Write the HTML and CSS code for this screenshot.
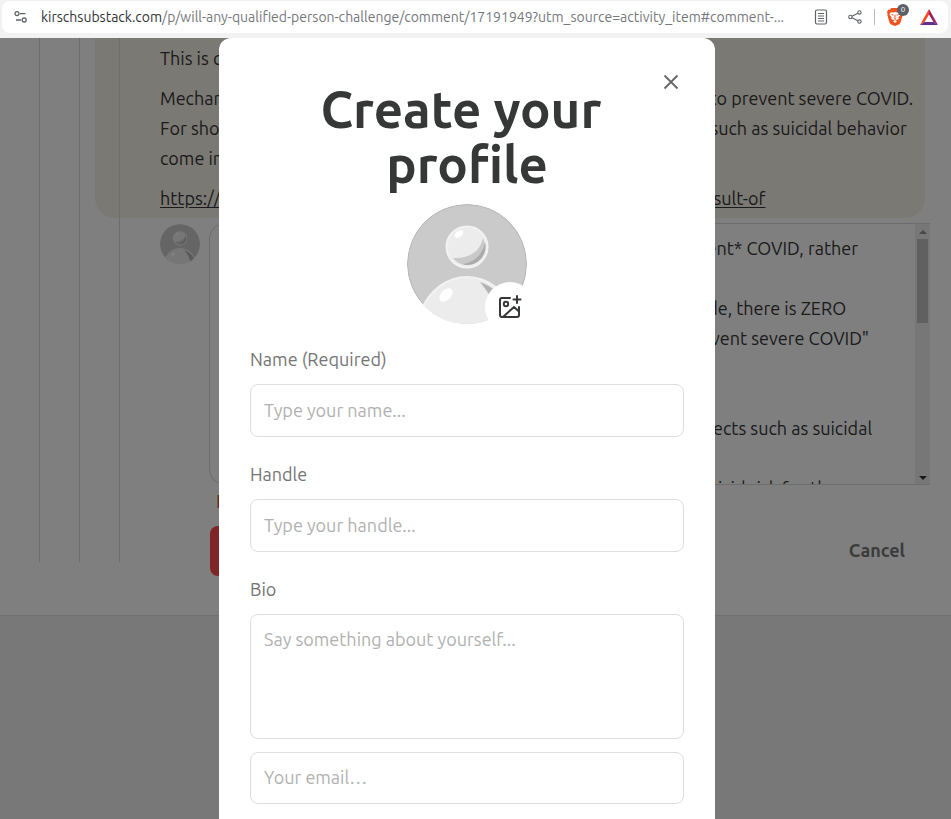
FILE: index.html
```html
<!DOCTYPE html>
<html lang="en">
<head>
    <meta charset="UTF-8">
    <meta name="viewport" content="width=device-width, initial-scale=1.0">
    <title>Create your profile</title>
    <link rel="stylesheet" href="styles.css">
</head>
<body>

    <!-- Address bar -->
    <header class="toolbar">
        <div class="address-bar">
            <button type="button" class="icon-button" aria-label="Site settings">
                <svg width="14" height="12" viewBox="0 0 14 12" fill="none" stroke="#5f6368" stroke-width="1.3">
                    <circle cx="3" cy="2.6" r="2"/><path d="M6 2.6h5.5M2 9h5"/><circle cx="10.2" cy="9" r="2"/>
                </svg>
            </button>
            <a href="#" class="url">kirschsubstack.com<span class="url-path">/p/will-any-qualified-person-challenge/comment/17191949?utm_source=activity_item#comment-...</span></a>
            <div class="toolbar-actions">
                <button type="button" class="icon-button" aria-label="Reader mode">
                    <svg width="14" height="16" viewBox="0 0 14 16" fill="none" stroke="#5f6368" stroke-width="1.2">
                        <rect x="1.5" y="1" width="11" height="14" rx="1.5"/><path d="M4 4.5h6M4 7h6M4 9.5h6M4 12h6"/>
                    </svg>
                </button>
                <button type="button" class="icon-button" aria-label="Share">
                    <svg width="14" height="14" viewBox="0 0 14 14" fill="none" stroke="#5f6368" stroke-width="1.1">
                        <circle cx="2.4" cy="7" r="1.7"/><circle cx="11.4" cy="2.4" r="1.7"/><circle cx="11.4" cy="11.6" r="1.7"/>
                        <path d="M4 6.2l5.9-3M4 7.8l5.9 3"/>
                    </svg>
                </button>
                <span class="divider"></span>
                <button type="button" class="icon-button shields" aria-label="Shields">
                    <svg width="16" height="18" viewBox="0 0 16 18">
                        <path fill="#f1531e" d="M4.4 0h7.2L13.3 1.8l1.4-.2L16 4l-.5 1.6.2 1.2-2 7.3c-.3 1.1-1 1.8-1.8 2.4L8 18l-3.9-1.5c-.9-.6-1.5-1.3-1.8-2.4l-2-7.3.2-1.2L0 4l1.3-2.4 1.4.2z"/>
                        <path fill="#fff" d="M3.7 4.2l2.5.3L8 4l1.8.5 2.5-.3 1.3 2.4-2.2 2.8.3 1.5-2.1 1.1L8 11.2 6.4 12l-2.1-1.1.3-1.5-2.2-2.8zM6 13.3l2-1.2 2 1.2-2 1.8z"/>
                        <path fill="none" stroke="#f1531e" d="M4.4 6.6l2.1.5M11.6 6.6l-2.1.5M8 6.8v2.4M6.7 9.6L8 10.4l1.3-.8"/>
                    </svg>
                    <span class="badge">0</span>
                </button>
                <button type="button" class="icon-button" aria-label="Rewards">
                    <svg width="18" height="16" viewBox="0 0 18 16">
                        <path fill="#ff4724" d="M9 0v5.6L4.6 13 0 16z"/>
                        <path fill="#9e1f63" d="M9 0l9 16-4.6-3L9 5.6z"/>
                        <path fill="#662d91" d="M0 16l4.6-3h8.8l4.6 3z"/>
                    </svg>
                </button>
            </div>
        </div>
    </header>

    <main class="page">
        <!-- Comment thread -->
        <div class="thread">
            <div class="rail"></div>
            <div class="rail"></div>
            <div class="rail"></div>
            <div class="thread-content">
                <article class="comment">
                    <p>This is correct.</p>
                    <p>Mechanism of action is spike proteins antibodies that the body used to prevent severe COVID.<br>
                    For short term uses of the drugs there are some known side effects, such as suicidal behavior<br>
                    come into play.</p>
                    <p><a href="#">https://www.kirschsubstack.com/p/how-to-treat-severe-covid-as-a-result-of</a></p>
                </article>
                <div class="reply">
                    <svg class="reply-avatar" width="40" height="40" viewBox="0 0 120 120" aria-hidden="true">
                        <use href="#avatar"/>
                    </svg>
                    <form class="reply-form">
                        <div class="editor">
                            <textarea class="editor-text" aria-label="Reply" wrap="off">
I have asked if the trials were never able to say if it will *prevent* COVID, rather
than treat it.
If you look at the whole of the public record and all of the code, there is ZERO
evidence in the later trial showing that it can or will ever "prevent severe COVID"


There are several other papers which list some of the side effects such as suicidal

The authors have looked at all of the published data on the suicid risk for the</textarea>
                            <div class="scrollbar">
                                <span class="arrow-up"></span>
                                <span class="thumb"></span>
                                <span class="arrow-down"></span>
                            </div>
                        </div>
                        <p class="reply-error">Please type your name</p>
                        <div class="reply-actions">
                            <button type="button" class="btn-post">Post</button>
                            <button type="button" class="btn-cancel">Cancel</button>
                        </div>
                    </form>
                </div>
            </div>
        </div>
        <footer class="footer"></footer>

        <!-- Profile dialog -->
        <div class="overlay">
            <div class="modal" role="dialog" aria-labelledby="modalTitle">
                <button type="button" class="icon-button close" aria-label="Close">
                    <svg width="16" height="16" viewBox="0 0 16 16" fill="none" stroke="#666" stroke-width="1.8">
                        <path d="M1.5 1.5l13 13M14.5 1.5l-13 13"/>
                    </svg>
                </button>
                <h1 id="modalTitle">Create your&nbsp;<br>profile</h1>

                <form class="profile-form">
                    <div class="avatar">
                        <svg width="120" height="120" viewBox="0 0 120 120" aria-hidden="true">
                            <defs>
                                <clipPath id="face"><circle cx="60" cy="60" r="60"/></clipPath>
                            </defs>
                            <g id="avatar" clip-path="url(#face)">
                                <circle cx="60" cy="60" r="59.5" fill="#cacaca" stroke="#b5b5b5"/>
                                <circle cx="60" cy="43" r="20.5" fill="#ececec" stroke="#f2f2f2" stroke-width="2"/>
                                <path fill="#c9c9c9" d="M76 34c6 14-3 27-16 27-6 0-11-3-14-7 14 1 27-5 30-20z"/>
                                <path fill="#ababab" d="M78 38c3 12-6 23-18 23-1 0-3 0-4-1 12-2 20-10 22-22z"/>
                                <ellipse cx="52" cy="30" rx="5" ry="3" fill="#fff" transform="rotate(-38 52 30)"/>
                                <path fill="#ececec" stroke="#f2f2f2" stroke-width="2" d="M14 108C21 87 40 73 60 73s40 14 47 38l-14 18H25z"/>
                                <path fill="#b2b2b2" d="M73 78c13 5 23 13 29 27l-10 11c-3-14-9-26-19-38z"/>
                                <ellipse cx="39" cy="91" rx="8" ry="5" fill="#fff" transform="rotate(-45 39 91)"/>
                            </g>
                        </svg>
                        <button type="button" class="upload" aria-label="Upload photo">
                            <svg width="24" height="24" viewBox="0 0 24 24" fill="none" stroke="#363737" stroke-width="2" stroke-linecap="round" stroke-linejoin="round">
                                <path d="M12 3H4a2 2 0 0 0-2 2v15a2 2 0 0 0 2 2h15a2 2 0 0 0 2-2v-8M19 1v7M15.5 4.5h7M5 22l11-10 5 4.5"/>
                                <circle cx="8" cy="9" r="2.2"/>
                            </svg>
                        </button>
                    </div>

                    <label for="name">Name (Required)</label>
                    <input type="text" id="name" placeholder="Type your name..." required>
                    <label for="handle">Handle</label>
                    <input type="text" id="handle" placeholder="Type your handle...">
                    <label for="bio">Bio</label>
                    <textarea id="bio" placeholder="Say something about yourself..."></textarea>
                    <input type="email" id="email" class="email" placeholder="Your email…" aria-label="Your email">
                </form>
            </div>
        </div>
    </main>

</body>
</html>
```
FILE: styles.css
```css
* {
    box-sizing: border-box;
}
body {
    margin: 0;
    height: 100vh;
    display: flex;
    flex-direction: column;
    overflow: hidden;
    font-family: Ubuntu, "Noto Sans", sans-serif;
    font-size: 18px;
    color: #363737;
}
button, input, textarea {
    font-family: inherit;
    font-size: inherit;
}
.icon-button {
    display: flex;
    padding: 0;
    border: none;
    background: none;
    cursor: pointer;
}

/* Address bar */
.toolbar {
    flex: none;
    height: 38px;
    padding: 1px 3px 5px 2px;
    background: #f2f2f3;
}
.address-bar {
    display: flex;
    align-items: center;
    height: 32px;
    padding: 0 10px 0 12px;
    border-radius: 8px;
    background: #fff;
}
.url {
    flex: 1;
    min-width: 0;
    margin-left: 13px;
    overflow: hidden;
    white-space: nowrap;
    font-size: 14px;
    line-height: 20px;
    color: #303236;
    text-decoration: none;
}
.url-path {
    color: #74777c;
}
.toolbar-actions {
    display: flex;
    align-items: center;
    gap: 12px;
}
.toolbar-actions .icon-button:nth-child(2) {
    margin-left: 8px;
}
.divider {
    width: 1px;
    height: 16px;
    background: #b8babd;
}
.shields {
    position: relative;
    margin-right: 5px;
}
.badge {
    position: absolute;
    top: -4px;
    right: -6px;
    width: 12px;
    height: 12px;
    border-radius: 50%;
    background: #5b5f68;
    color: #fff;
    font-size: 8px;
    line-height: 12px;
    text-align: center;
}

/* Comment thread */
.page {
    position: relative;
    flex: 1;
    min-height: 0;
    display: flex;
    flex-direction: column;
    overflow: hidden;
    background: #fff;
}
.thread {
    display: flex;
    height: 524px;
    margin-bottom: 53px;
    padding-right: 21px;
}
.rail {
    flex: none;
    width: 40px;
    border-right: 1px solid #dadada;
}
.thread-content {
    flex: 1;
    min-width: 0;
}
.comment {
    margin: 0 5px 5px -25px;
    padding: 5px 0 5px 65px;
    border-radius: 0 0 20px 20px;
    background: rgba(236, 226, 200, 0.4);
    line-height: 30px;
    white-space: nowrap;
}
.comment p {
    margin: 0 0 10px;
}
.comment p:last-child {
    margin-bottom: 0;
}
.comment a {
    color: inherit;
    text-underline-offset: 2px;
}
.reply {
    display: flex;
    gap: 9px;
    padding-left: 40px;
}
.reply-avatar {
    flex: none;
    margin-top: 1px;
}
.reply-form {
    flex: 1;
    min-width: 0;
}
.editor {
    display: flex;
    height: 262px;
    border: 1px solid #dadada;
    border-right: none;
    border-radius: 16px 0 0 16px;
    overflow: hidden;
}
.editor-text {
    flex: 1;
    min-width: 0;
    padding: 9px 12px 0;
    border: none;
    background: none;
    color: inherit;
    line-height: 30px;
    resize: none;
    overflow: hidden;
}
.scrollbar {
    display: flex;
    flex-direction: column;
    align-items: center;
    width: 15px;
    padding: 6px 0 4px;
    background: #eee;
}
.arrow-up, .arrow-down {
    border: 4px solid transparent;
}
.arrow-up {
    border-top: none;
    border-bottom-color: #909090;
}
.arrow-down {
    margin-top: auto;
    border-bottom: none;
    border-top-color: #333;
}
.thumb {
    width: 11px;
    height: 84px;
    margin-top: 5px;
    background: #c1c1c1;
}
.reply-error {
    margin: 0;
    padding: 5px 7px;
    line-height: 22px;
    color: #e0383e;
}
.reply-actions {
    display: flex;
    justify-content: space-between;
    margin: 9px 5px 0 1px;
}
.btn-post, .btn-cancel {
    height: 50px;
    padding: 0 20px 2px;
    border: none;
    border-radius: 8px;
    font-weight: bold;
}
.btn-post {
    background: #ff484e;
    color: #fff;
}
.btn-cancel {
    background: none;
    color: #777;
}
.footer {
    flex: 1;
    border-top: 1px solid #e0e0e0;
    background: #f0f0f0;
}

/* Profile dialog */
.overlay {
    position: absolute;
    inset: 0;
    padding-right: 17px;
    background: rgba(0, 0, 0, 0.5);
}
.modal {
    position: relative;
    max-width: 496px;
    min-height: 100%;
    margin: 0 auto;
    padding: 44px 31px 31px;
    border-radius: 12px 12px 0 0;
    background: #fff;
}
.close {
    position: absolute;
    top: 36px;
    right: 36px;
}
h1 {
    margin: 0;
    font-size: 51px;
    line-height: 55px;
    text-align: center;
}
.avatar {
    position: relative;
    width: 120px;
    height: 120px;
    margin: 12px auto 24px;
}
.upload {
    position: absolute;
    right: -8px;
    bottom: -8px;
    display: flex;
    align-items: center;
    justify-content: center;
    width: 50px;
    height: 50px;
    padding: 0;
    border: none;
    border-radius: 50%;
    background: #fff;
    cursor: pointer;
}
.profile-form {
    display: flex;
    flex-direction: column;
}
.profile-form label {
    margin-bottom: 14px;
    line-height: 22px;
    color: #757575;
}
.profile-form input, .profile-form textarea {
    width: 100%;
    height: 53px;
    margin: 0 0 26px;
    padding: 0 13px 2px;
    border: 1px solid #dedede;
    border-radius: 8px;
    background: #fff;
    color: #363737;
}
.profile-form textarea {
    height: 125px;
    margin-bottom: 13px;
    padding-top: 12px;
    line-height: 24px;
    resize: none;
}
.profile-form .email {
    height: 52px;
    margin-bottom: 0;
}
.profile-form ::placeholder {
    color: #b1b1b1;
}
```
